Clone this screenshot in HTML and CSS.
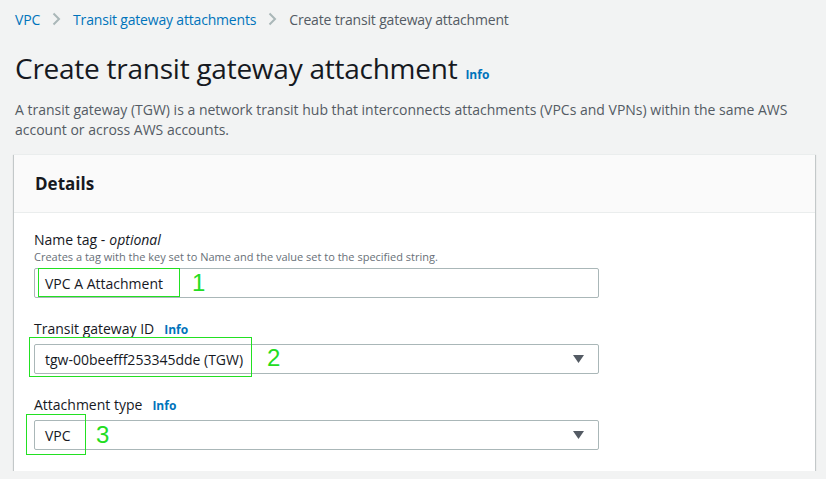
FILE: index.html
```html
<!DOCTYPE html>
<html lang="en">
<head>
<meta charset="utf-8">
<title>Create transit gateway attachment</title>
<link rel="stylesheet" href="styles.css">
</head>
<body>
<div class="page">
  <nav class="breadcrumbs">
    <a class="crumb link" href="#">VPC</a>
    <span class="chev"><svg width="9" height="14" viewBox="0 0 9 14"><path d="M1.5 1.5 L7 7 L1.5 12.5" fill="none" stroke="#aab7b8" stroke-width="2"/></svg></span>
    <a class="crumb link" href="#">Transit gateway attachments</a>
    <span class="chev"><svg width="9" height="14" viewBox="0 0 9 14"><path d="M1.5 1.5 L7 7 L1.5 12.5" fill="none" stroke="#aab7b8" stroke-width="2"/></svg></span>
    <span class="crumb current">Create transit gateway attachment</span>
  </nav>

  <header class="page-header">
    <h1 class="title">Create transit gateway attachment</h1>
    <a class="info" href="#">Info</a>
  </header>
  <p class="description">A transit gateway (TGW) is a network transit hub that interconnects attachments (VPCs and VPNs) within the same AWS account or across AWS accounts.</p>

  <section class="card">
    <div class="card-header">
      <h2 class="card-title">Details</h2>
    </div>
    <div class="card-body">
      <div class="field">
        <div class="label">Name tag - <em>optional</em></div>
        <div class="hint">Creates a tag with the key set to Name and the value set to the specified string.</div>
        <div class="control">
          <div class="input">VPC A Attachment</div>
          <span class="mark mark-1"></span>
          <span class="num num-1">1</span>
        </div>
      </div>

      <div class="field">
        <div class="label">Transit gateway ID <a class="info small" href="#">Info</a></div>
        <div class="control">
          <div class="input select">
            <span>tgw-00beefff253345dde (TGW)</span>
            <svg class="caret" width="11" height="8" viewBox="0 0 11 8"><path d="M0 0 H11 L5.5 8 Z" fill="#545b64"/></svg>
          </div>
          <span class="mark mark-2"></span>
          <span class="num num-2">2</span>
        </div>
      </div>

      <div class="field">
        <div class="label">Attachment type <a class="info small" href="#">Info</a></div>
        <div class="control">
          <div class="input select">
            <span>VPC</span>
            <svg class="caret" width="11" height="8" viewBox="0 0 11 8"><path d="M0 0 H11 L5.5 8 Z" fill="#545b64"/></svg>
          </div>
          <span class="mark mark-3"></span>
          <span class="num num-3">3</span>
        </div>
      </div>
    </div>
  </section>
</div>
</body>
</html>
```

FILE: styles.css
```css
* { box-sizing: border-box; }

html, body {
  margin: 0;
  padding: 0;
  background: #f2f3f3;
  font-family: "Open Sans", "Noto Sans", "Liberation Sans", sans-serif;
  color: #16191f;
}

.page {
  width: 801px;
  margin-left: 14px;
  padding-top: 8px;
}

.breadcrumbs {
  display: flex;
  align-items: center;
  gap: 12px;
  height: 22px;
  padding-left: 1px;
  font-size: 14px;
  letter-spacing: -0.18px;
}

.crumb { text-decoration: none; white-space: nowrap; }
.link { color: #0073bb; }
.current { color: #545b64; }
.chev { display: flex; align-items: center; }

.page-header {
  display: flex;
  align-items: baseline;
  gap: 8px;
  margin-top: 20px;
  padding-left: 1px;
}

.title {
  margin: 0;
  font-size: 28px;
  font-weight: 400;
  line-height: 36px;
  letter-spacing: -0.25px;
}

.info {
  color: #0073bb;
  font-size: 12px;
  font-weight: 700;
  text-decoration: none;
}

.description {
  margin: 14px 0 0 0;
  padding-left: 1px;
  font-size: 14px;
  line-height: 20px;
  color: #545b64;
  width: 780px;
}

.card {
  margin-top: 14px;
  background: #fff;
  box-shadow: 0 1px 1px 0 rgba(0, 28, 36, .3), 1px 1px 1px 0 rgba(0, 28, 36, .15), -1px 1px 1px 0 rgba(0, 28, 36, .15);
  border-top: 1px solid #eaeded;
}

.card-header {
  background: #fafafa;
  border-bottom: 1px solid #eaeded;
  height: 58px;
  display: flex;
  align-items: center;
  padding-left: 21px;
}

.card-title {
  margin: 0;
  font-size: 17px;
  font-weight: 700;
  line-height: 22px;
}

.card-body {
  padding: 16px 20px 21px 20px;
  display: flex;
  flex-direction: column;
  gap: 20px;
}

.field { display: flex; flex-direction: column; }

.label {
  font-size: 14px;
  line-height: 22px;
  display: flex;
  align-items: baseline;
  gap: 10px;
}
.label em { font-style: italic; margin-left: -6px; }
.info.small { font-size: 12px; }

.hint {
  font-size: 11px;
  line-height: 16px;
  color: #687078;
  margin-top: -2px;
}

.control {
  position: relative;
  width: 565px;
  margin-top: 3px;
}

.input {
  height: 30px;
  border: 1px solid #aab7b8;
  border-radius: 2px;
  background: #fff;
  display: flex;
  align-items: center;
  padding: 0 10px;
  font-size: 14px;
  color: #16191f;
}

.select { justify-content: space-between; padding-right: 14px; }
.caret { display: block; }

.mark {
  position: absolute;
  border: 1px solid #22e022;
}
.mark-1 { left: 4px; top: 0; width: 142px; height: 29px; }
.mark-2 { left: -5px; top: -7px; width: 223px; height: 40px; }
.mark-3 { left: -8px; top: -6px; width: 60px; height: 41px; }

.num {
  position: absolute;
  color: #22dd22;
  font-family: "Liberation Sans", "Open Sans", sans-serif;
  font-size: 24px;
  line-height: 24px;
}
.num-1 { left: 158px; top: 3px; }
.num-2 { left: 233px; top: 2px; }
.num-3 { left: 62px; top: 3px; }
```
